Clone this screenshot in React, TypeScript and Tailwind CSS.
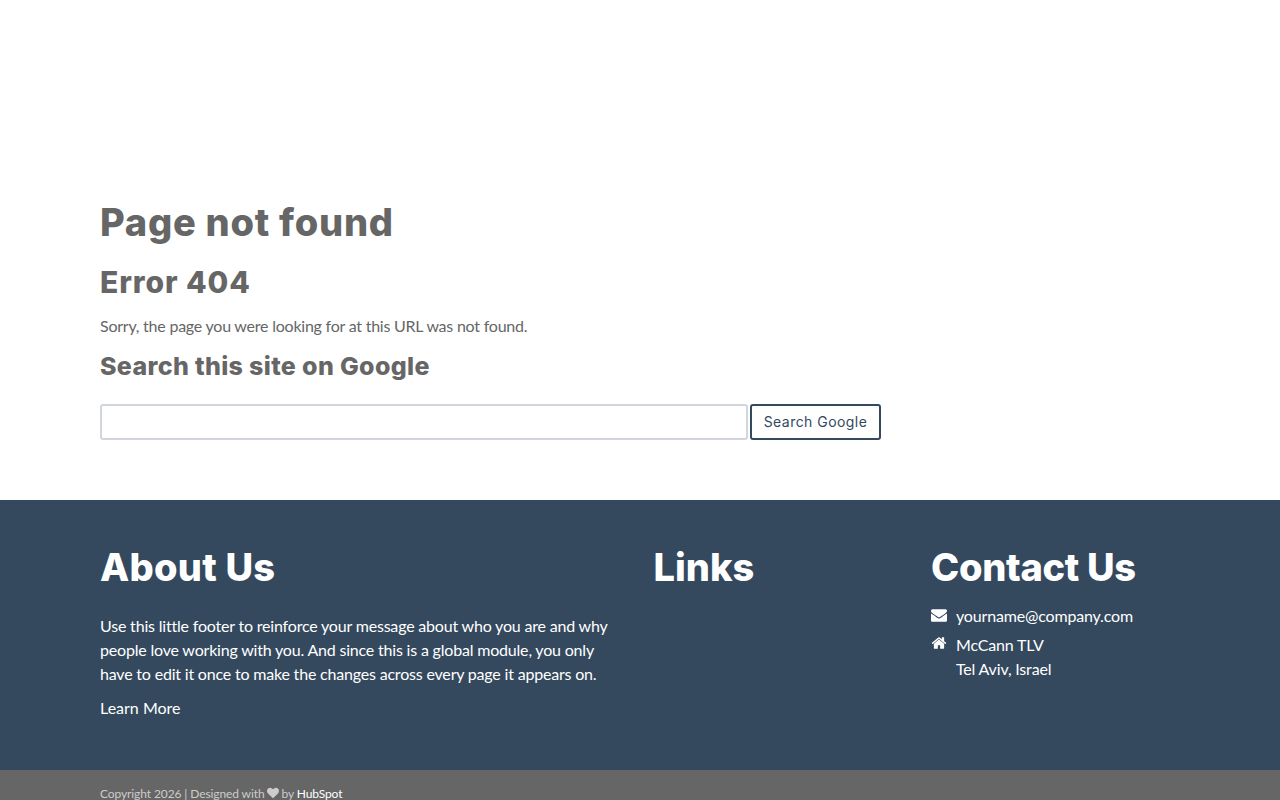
const headingFont = "font-['Inter','Liberation_Sans',sans-serif]";

function EnvelopeIcon() {
  return (
    <svg viewBox="0 0 1792 1792" className="mt-[3px] h-[16px] w-[16px] shrink-0" fill="currentColor">
      <path d="M1792 710v794q0 66-47 113t-113 47h-1472q-66 0-113-47t-47-113v-794q44 49 101 87 362 246 497 345 57 42 92.5 65.5t94.5 48 110 24.5h2q51 0 110-24.5t94.5-48 92.5-65.5q170-123 498-345 57-39 100-87zm0-294q0 79-49 151t-122 123q-376 261-468 325-10 7-42.5 30.5t-54 38-52 32.5-57.5 27-50 9h-2q-23 0-50-9t-57.5-27-52-32.5-54-38-42.5-30.5q-91-64-262-182.5t-205-142.5q-62-42-117-115.5t-55-136.5q0-78 41.5-130t118.5-52h1472q65 0 112.5 47t47.5 113z" />
    </svg>
  );
}

function HomeIcon() {
  return (
    <svg viewBox="0 0 1792 1792" className="mt-[2px] h-[16px] w-[16px] shrink-0" fill="currentColor">
      <path d="M1472 992v480q0 26-19 45t-45 19h-384v-384h-256v384h-384q-26 0-45-19t-19-45v-480q0-1 .5-3t.5-3l575-474 575 474q1 2 1 6zm223-69l-62 74q-8 9-21 11h-3q-13 0-21-7l-692-577-692 577q-12 8-24 7-13-2-21-11l-62-74q-8-10-7-23.5t11-21.5l719-599q32-26 76-26t76 26l244 204v-195q0-14 9-23t23-9h192q14 0 23 9t9 23v408l219 182q10 8 11 21.5t-7 23.5z" />
    </svg>
  );
}

function HeartIcon() {
  return (
    <svg viewBox="0 0 1792 1792" className="mr-[-1px] inline h-[12px] w-[12px] align-[-1px]" fill="currentColor">
      <path d="M896 1664q-26 0-44-18l-624-602q-10-8-27.5-26t-55.5-65.5-68-97.5-53.5-121-23.5-138q0-220 127-344t351-124q62 0 126.5 21.5t120 58 95.5 68.5 76 68q36-36 76-68t95.5-68.5 120-58 126.5-21.5q224 0 351 124t127 344q0 221-229 450l-623 600q-18 18-44 18z" />
    </svg>
  );
}

export default function App() {
  return (
    <div className="h-[800px] overflow-hidden bg-white font-['Lato','Liberation_Sans',sans-serif] text-[16px] leading-[24px]">
      <main className="h-[500px] px-[100px] pt-[200px] text-[#666666]">
        <h1 className={`${headingFont} text-[38px] leading-[45px] font-extrabold tracking-[0.75px]`}>Page not found</h1>
        <h2 className={`${headingFont} mt-[19px] text-[30px] leading-[36px] font-extrabold tracking-[0.92px]`}>Error 404</h2>
        <p className="mt-[14px] tracking-[-0.23px]">Sorry, the page you were looking for at this URL was not found.</p>
        <h3 className={`${headingFont} mt-[13px] text-[25px] leading-[30px] font-extrabold tracking-[0.35px]`}>Search this site on Google</h3>
        <form className="mt-[23px] flex items-center gap-[2px]">
          <input
            type="text"
            aria-label="Search"
            className="h-[36px] w-[648px] rounded-[3px] border-2 border-[#d1d6dc] bg-white"
          />
          <button
            type="button"
            className={`${headingFont} h-[36px] w-[131px] rounded-[3px] border-2 border-[#34495e] bg-white text-[14px] tracking-[0.45px] text-[#34495e]`}
          >
            Search Google
          </button>
        </form>
      </main>

      <footer className="h-[270px] bg-[#34495e] px-[100px] pt-[44px] text-white">
        <div className="flex">
          <div className="w-[553.5px] pr-[30px]">
            <h2 className={`${headingFont} text-[38px] leading-[46px] font-extrabold tracking-[0.25px]`}>About Us</h2>
            <p className="mt-[24px] tracking-[-0.19px]">
              Use this little footer to reinforce your message about who you are and why people love working with you. And since this is a global module, you only have to edit it once to make the changes across every page it appears on.
            </p>
            <a className="mt-[10px] block" href="#">Learn More</a>
          </div>
          <div className="w-[277.5px]">
            <h2 className={`${headingFont} text-[38px] leading-[46px] font-extrabold`}>Links</h2>
          </div>
          <div className="flex-1">
            <h2 className={`${headingFont} text-[38px] leading-[46px] font-extrabold tracking-[-0.3px]`}>Contact Us</h2>
            <div className="mt-[14px] flex">
              <EnvelopeIcon />
              <span className="ml-[9px] tracking-[-0.17px]">yourname@company.com</span>
            </div>
            <div className="mt-[5px] flex">
              <HomeIcon />
              <span className="ml-[9px] tracking-[-0.17px]">
                McCann TLV
                <br />
                Tel Aviv, Israel
              </span>
            </div>
          </div>
        </div>
      </footer>

      <div className="h-[30px] bg-[#666666] px-[100px] pt-[17px] text-[12px] leading-[13px] tracking-[-0.1px] text-[#cccccc]">
        Copyright 2026 | Designed with <HeartIcon /> by <a className="text-white" href="#">HubSpot</a>
      </div>
    </div>
  );
}
